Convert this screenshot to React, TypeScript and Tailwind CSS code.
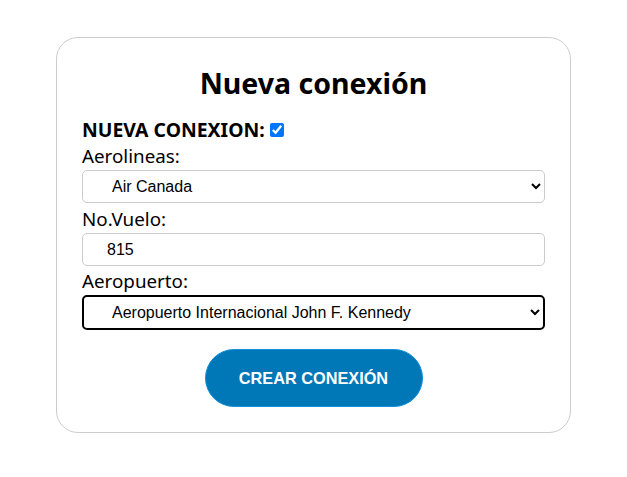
import React, { useState } from 'react';

const App: React.FC = () => {
  const [nueva, setNueva] = useState(true);
  const [aerolinea, setAerolinea] = useState('Air Canada');
  const [vuelo, setVuelo] = useState('815');
  const [aeropuerto, setAeropuerto] = useState('JFK');

  return (
    <div className="min-h-[477px] w-full bg-white flex justify-center pt-[37px]">
      <div className="w-[515px] h-[396px] border border-[#cccccc] rounded-[22px] px-[25px] pt-[25px] pb-[25px] flex flex-col font-['Noto_Sans',sans-serif] text-black">
        <h1 className="text-center text-[28.5px] font-bold leading-[40px] mb-[16px]">Nueva conexión</h1>
        <div className="flex items-center h-[22px] text-[19.4px] font-bold leading-[22px]">
          <span>NUEVA CONEXION:</span>
          <input
            type="checkbox"
            checked={nueva}
            onChange={(e) => setNueva(e.target.checked)}
            className="ml-[5px] w-[14px] h-[14px]"
          />
        </div>
        <label className="text-[18.8px] leading-[22px] mt-[4px] mb-[3px]">Aerolineas:</label>
        <select
          value={aerolinea}
          onChange={(e) => setAerolinea(e.target.value)}
          className="h-[34px] border border-[#cccccc] rounded-[5px] pl-[25px] pr-[6px] text-[16px] font-['Liberation_Sans',Arial,sans-serif] bg-white"
        >
          <option>Air Canada</option>
          <option>Aeroméxico</option>
          <option>American Airlines</option>
        </select>
        <label className="text-[18.8px] leading-[22px] mt-[5px] mb-[3px]">No.Vuelo:</label>
        <input
          type="text"
          value={vuelo}
          onChange={(e) => setVuelo(e.target.value)}
          className="h-[33px] border border-[#cccccc] rounded-[5px] pl-[24px] text-[16px] font-['Liberation_Sans',Arial,sans-serif] outline-none"
        />
        <label className="text-[18.8px] leading-[22px] mt-[4px] mb-[3px]">Aeropuerto:</label>
        <select
          value={aeropuerto}
          onChange={(e) => setAeropuerto(e.target.value)}
          className="h-[36px] border-2 border-black rounded-[5px] pl-[24px] pr-[5px] text-[16px] font-['Liberation_Sans',Arial,sans-serif] bg-white"
        >
          <option value="JFK">Aeropuerto Internacional John F. Kennedy</option>
          <option value="MEX">Aeropuerto Internacional de la Ciudad de México</option>
        </select>
        <div className="flex justify-center mt-[19px]">
          <button
            type="button"
            className="w-[218px] h-[58px] rounded-full bg-[#0077b6] border border-[#1590dc] text-white font-bold text-[16.3px] font-['Liberation_Sans',Arial,sans-serif]"
          >
            CREAR CONEXIÓN
          </button>
        </div>
      </div>
    </div>
  );
};

export default App;
